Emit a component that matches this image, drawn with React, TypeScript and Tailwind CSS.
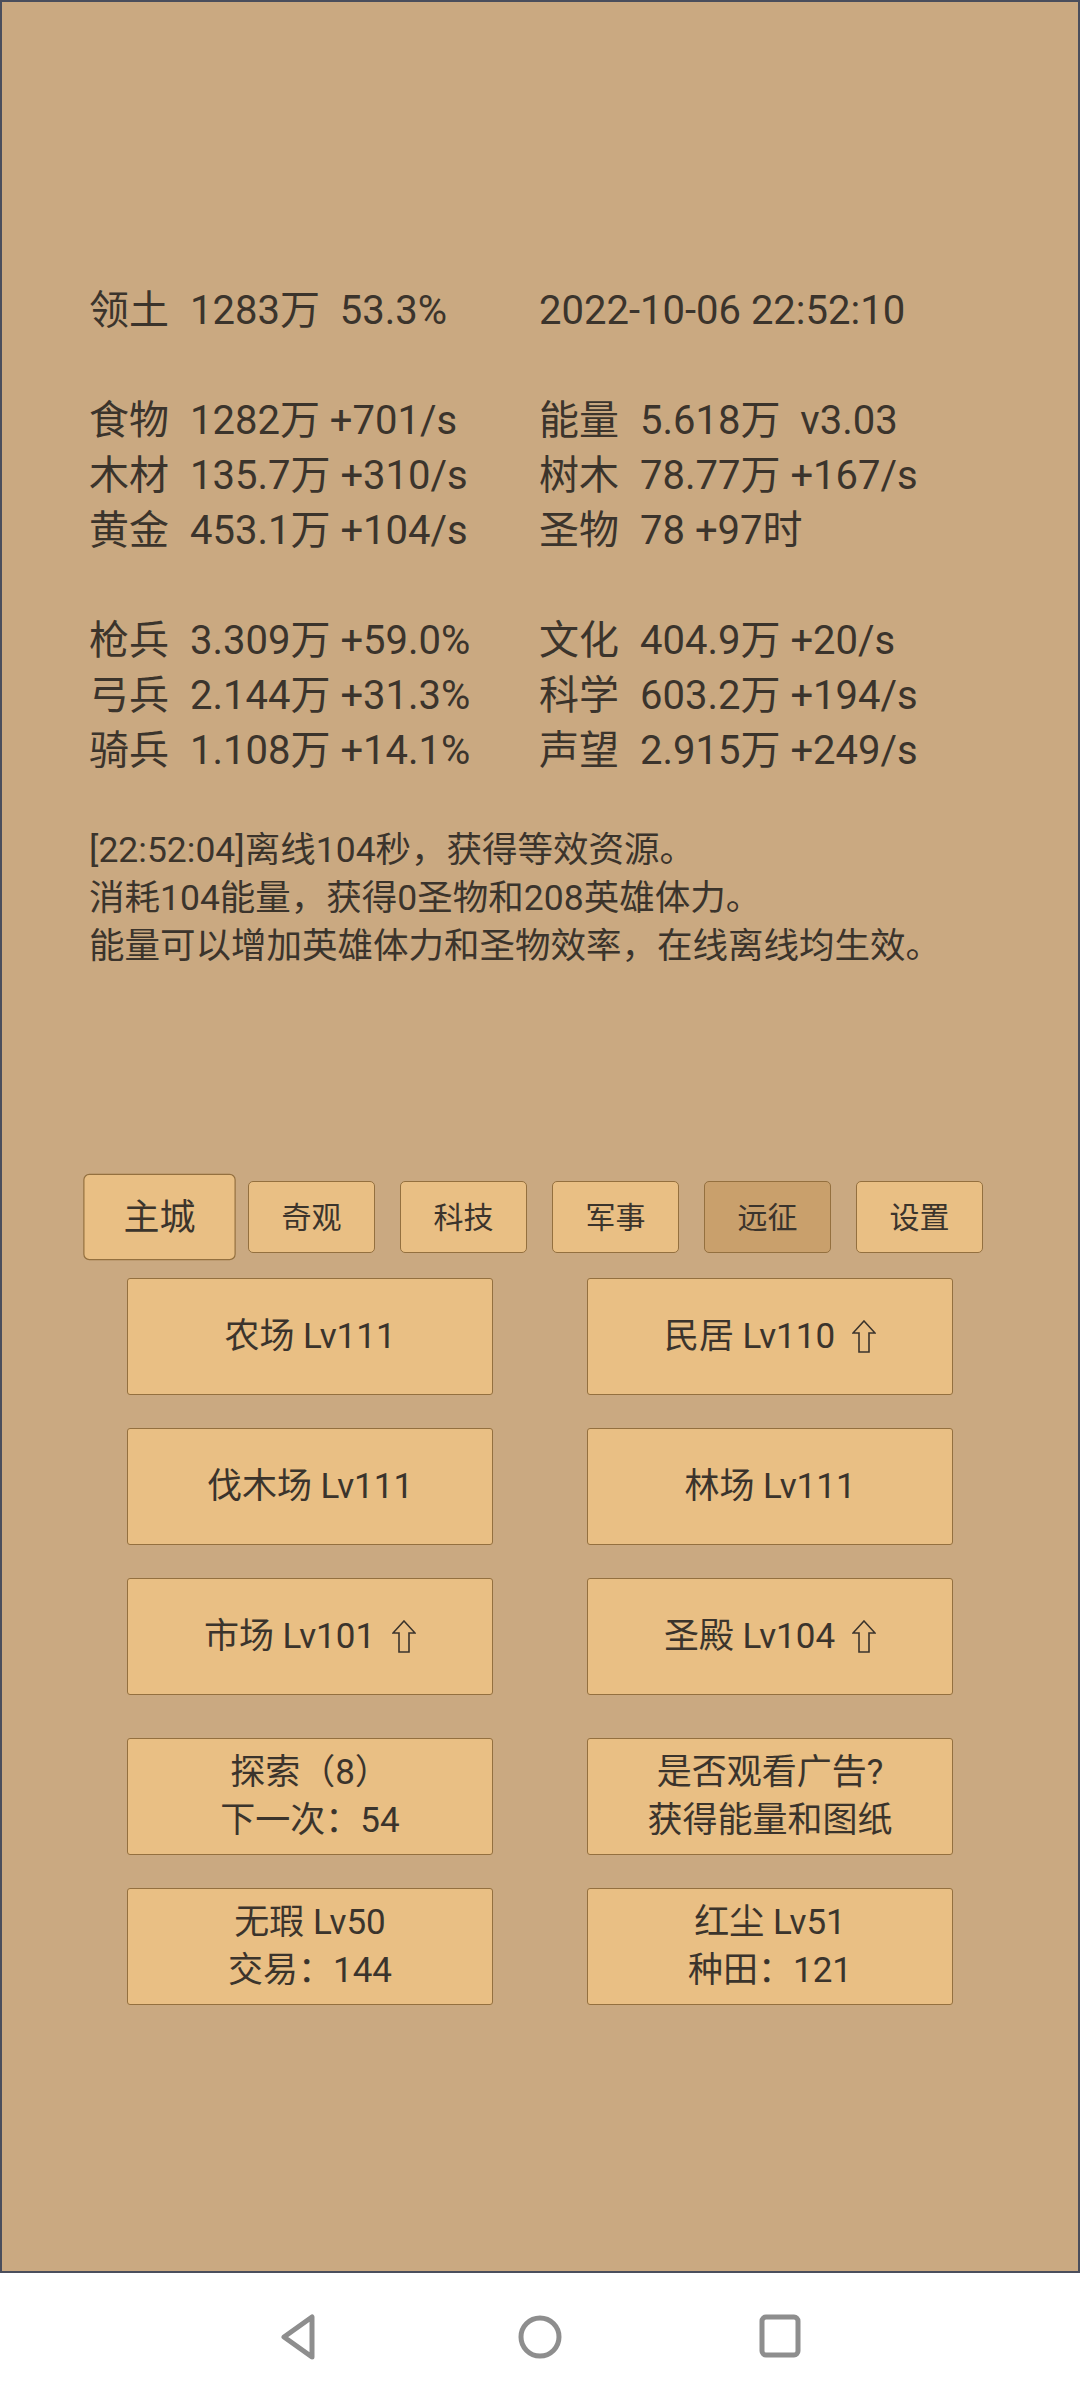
const statsLeft: [string, string][] = [
  ["领土", "1283万  53.3%"],
  ["", ""],
  ["食物", "1282万 +701/s"],
  ["木材", "135.7万 +310/s"],
  ["黄金", "453.1万 +104/s"],
  ["", ""],
  ["枪兵", "3.309万 +59.0%"],
  ["弓兵", "2.144万 +31.3%"],
  ["骑兵", "1.108万 +14.1%"],
]

const statsRight: [string, string][] = [
  ["2022-10-06 22:52:10", ""],
  ["", ""],
  ["能量", "5.618万  v3.03"],
  ["树木", "78.77万 +167/s"],
  ["圣物", "78 +97时"],
  ["", ""],
  ["文化", "404.9万 +20/s"],
  ["科学", "603.2万 +194/s"],
  ["声望", "2.915万 +249/s"],
]

const tabs = ["主城", "奇观", "科技", "军事", "远征", "设置"]

const UpArrow = () => (
  <svg width="24" height="33" viewBox="0 0 24 33" className="ml-[17px] shrink-0">
    <path
      d="M12 1 L23 13 L17 13 L17 32 L7 32 L7 13 L1 13 Z"
      fill="none"
      stroke="#3b342c"
      strokeWidth="1.6"
      strokeLinejoin="miter"
    />
  </svg>
)

type Building = { lines: string[]; up?: boolean }

const rows: { mt: string; items: Building[] }[] = [
  { mt: "mt-[25px]", items: [{ lines: ["农场 Lv111"] }, { lines: ["民居 Lv110"], up: true }] },
  { mt: "mt-[33px]", items: [{ lines: ["伐木场 Lv111"] }, { lines: ["林场 Lv111"] }] },
  { mt: "mt-[33px]", items: [{ lines: ["市场 Lv101"], up: true }, { lines: ["圣殿 Lv104"], up: true }] },
  { mt: "mt-[43px]", items: [{ lines: ["探索（8）", "下一次：54"] }, { lines: ["是否观看广告?", "获得能量和图纸"] }] },
  { mt: "mt-[33px]", items: [{ lines: ["无瑕 Lv50", "交易：144"] }, { lines: ["红尘 Lv51", "种田：121"] }] },
]

const StatColumn = ({ data }: { data: [string, string][] }) => (
  <div className="flex flex-col">
    {data.map(([label, value], i) => (
      <div key={i} className="flex h-[55px] leading-[55px] whitespace-pre">
        {value === "" ? (
          <span>{label}</span>
        ) : (
          <>
            <span className="w-[101px] shrink-0">{label}</span>
            <span>{value}</span>
          </>
        )}
      </div>
    ))}
  </div>
)

const App = () => {
  return (
    <div className="w-[1080px] h-[2400px] flex flex-col bg-white font-[Roboto,'Noto_Sans_CJK_SC',sans-serif] text-[#3b342c]">
      <div className="h-[2273px] shrink-0 border-2 border-[#4a4e5c] bg-[#caa981] flex flex-col">
        <div className="pt-[281px] pl-[87px] flex text-[40px]">
          <div className="w-[450px]">
            <StatColumn data={statsLeft} />
          </div>
          <StatColumn data={statsRight} />
        </div>

        <div className="mt-[48px] pl-[87px] text-[35.5px] leading-[48px]">
          <div>[22:52:04]离线104秒，获得等效资源。</div>
          <div>消耗104能量，获得0圣物和208英雄体力。</div>
          <div>能量可以增加英雄体力和圣物效率，在线离线均生效。</div>
        </div>

        <div className="mt-[211px] pl-[94px] flex gap-[25px]">
          {tabs.map((t, i) => (
            <div
              key={t}
              className={
                "w-[127px] h-[72px] flex items-center justify-center rounded-[5px] border border-[#94703f] text-[30px] " +
                (i === 0 ? "scale-[1.2] bg-[#e9bf84]" : i === 4 ? "bg-[#c9a06c]" : "bg-[#e9bf84]")
              }
            >
              {t}
            </div>
          ))}
        </div>

        {rows.map((row, r) => (
          <div key={r} className={"flex pl-[125px] gap-[94px] " + row.mt}>
            {row.items.map((b, j) => (
              <div
                key={j}
                className="w-[366px] h-[117px] flex flex-col items-center justify-center rounded-[3px] border border-[#94703f] bg-[#e9bf84] text-[35px] leading-[48px]"
              >
                {b.lines.map((l, k) => (
                  <div key={k} className="flex items-center whitespace-pre">
                    <span>{l}</span>
                    {b.up && <UpArrow />}
                  </div>
                ))}
              </div>
            ))}
          </div>
        ))}
      </div>

      <div className="flex-1 flex items-center justify-center">
        <div className="flex items-center">
          <svg width="44" height="48" viewBox="0 0 44 48" className="ml-[1px]">
            <path d="M34 4 L34 44 L6 24 Z" fill="none" stroke="#8e8e8e" strokeWidth="5" strokeLinejoin="round" />
          </svg>
          <svg width="48" height="48" viewBox="0 0 48 48" className="ml-[194px]">
            <circle cx="24" cy="24" r="19" fill="none" stroke="#8e8e8e" strokeWidth="5" />
          </svg>
          <svg width="46" height="48" viewBox="0 0 46 48" className="ml-[193px]">
            <rect x="5" y="4" width="36" height="38" rx="4" fill="none" stroke="#8e8e8e" strokeWidth="5" />
          </svg>
        </div>
      </div>
    </div>
  )
}

export default App
